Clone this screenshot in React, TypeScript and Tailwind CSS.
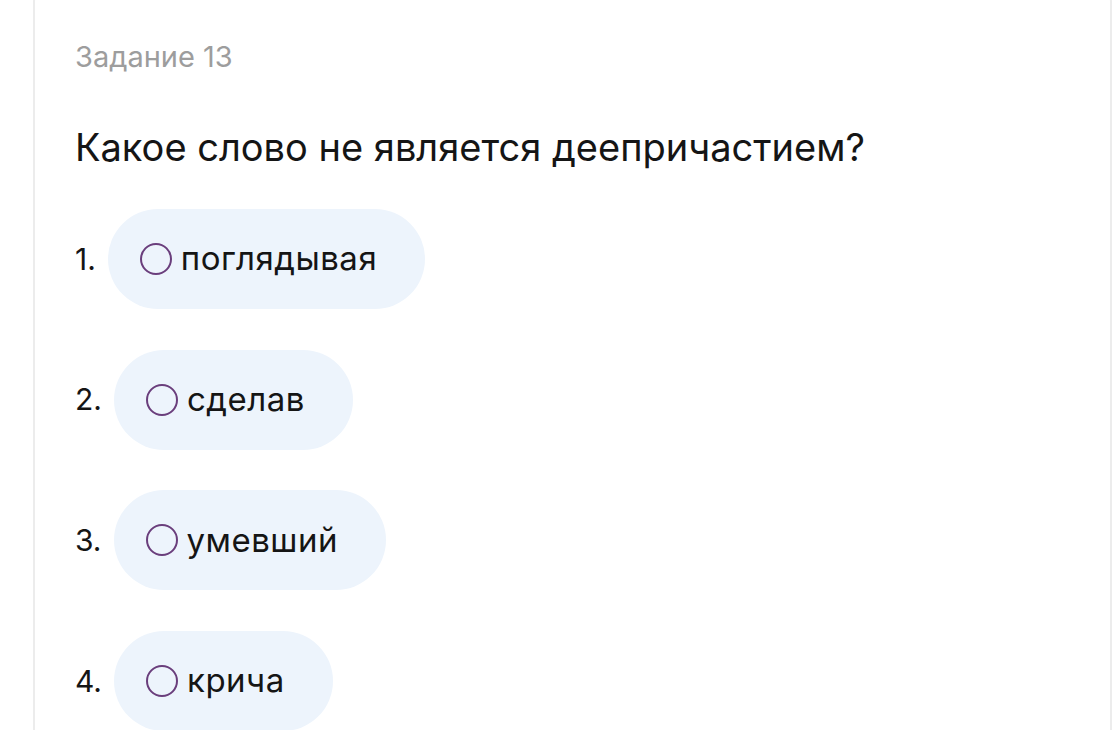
const options = [
  { n: '1.', text: 'поглядывая' },
  { n: '2.', text: 'сделав' },
  { n: '3.', text: 'умевший' },
  { n: '4.', text: 'крича' },
]

export default function App() {
  return (
    <div
      className="h-[730px] w-[1112px] overflow-hidden bg-white pl-[33px]"
      style={{ fontFamily: 'Inter, "Noto Sans", sans-serif' }}
    >
      <div className="-mt-[14px] min-h-[760px] rounded-2xl border-2 border-[#ececec] bg-white pl-[40px] pt-[52px]">
        <p className="text-[29px] leading-[34px] text-[#9d9d9d]">Задание 13</p>
        <h1 className="mt-[50px] text-[38px] leading-[46px] text-[#151515]">
          Какое слово не является деепричастием?
        </h1>
        <div className="mt-[39px] flex flex-col gap-[40.7px]">
          {options.map((o) => (
            <div key={o.n} className="flex items-center gap-[12px]">
              <span className="text-[30px] text-[#151515]">{o.n}</span>
              <div className="flex h-[100px] items-center gap-[9px] rounded-full bg-[#edf4fc] pl-[32px] pr-[48px]">
                <span className="h-[32px] w-[32px] shrink-0 rounded-full border-2 border-[#6a3e7c]" />
                <span className="text-[33px] tracking-[0.5px] text-[#151515]">{o.text}</span>
              </div>
            </div>
          ))}
        </div>
      </div>
    </div>
  )
}
